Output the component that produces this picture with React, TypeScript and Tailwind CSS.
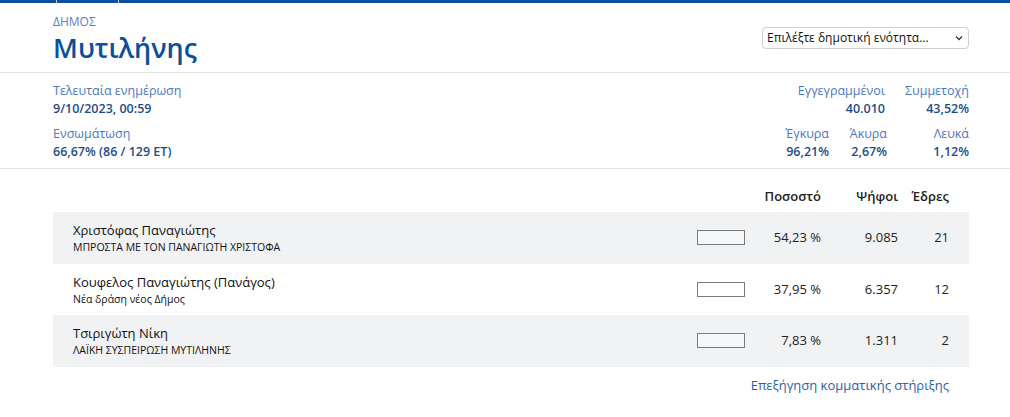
import React from "react";

const candidates = [
  { name: "Χριστόφας Παναγιώτης", party: "ΜΠΡΟΣΤΑ ΜΕ ΤΟΝ ΠΑΝΑΓΙΩΤΗ ΧΡΙΣΤΟΦΑ", pct: "54,23 %", votes: "9.085", seats: "21", bold: true },
  { name: "Κουφελος Παναγιώτης (Πανάγος)", party: "Νέα δράση νέος Δήμος", pct: "37,95 %", votes: "6.357", seats: "12", bold: false },
  { name: "Τσιριγώτη Νίκη", party: "ΛΑΪΚΗ ΣΥΣΠΕΙΡΩΣΗ ΜΥΤΙΛΗΝΗΣ", pct: "7,83 %", votes: "1.311", seats: "2", bold: false },
];

const Stat = ({ label, value, w }: { label: string; value: string; w: string }) => (
  <div className={`${w} text-right`}>
    <div className="text-[12.5px] leading-[18px] text-[#4d78bd]">{label}</div>
    <div className="text-[12.5px] leading-[18px] font-semibold text-[#1d4c8a]">{value}</div>
  </div>
);

export default function App() {
  return (
    <div className="min-h-[417px] bg-white font-['Open_Sans',sans-serif] text-[#222]">
      <div className="h-[3px] bg-[#0b4f9c] flex">
        <div className="w-[56px]" />
        <div className="w-px bg-white/70" />
        <div className="w-[61px]" />
        <div className="w-px bg-white/70" />
      </div>

      <div className="flex items-start justify-between pl-[53px] pr-[41px] pt-[11px] pb-[6px] border-b border-[#e2e2e2]">
        <div>
          <div className="text-[12px] leading-[16px] text-[#5b7fc6] uppercase">ΔΗΜΟΣ</div>
          <h1 className="text-[27px] leading-[36px] font-semibold text-[#0b4f9c]">Μυτιλήνης</h1>
        </div>
        <div className="mt-[13px] w-[207px] h-[22px] border border-[#cfcfcf] rounded-[4px] flex items-center justify-between pl-[4px] pr-[5px] text-[12px] text-[#111]">
          <span>Επιλέξτε δημοτική ενότητα...</span>
          <svg width="8" height="6" viewBox="0 0 8 6"><path d="M1 1.5 L4 4.5 L7 1.5" fill="none" stroke="#333" strokeWidth="1.3" /></svg>
        </div>
      </div>

      <div className="flex justify-between pl-[53px] pr-[41px] pt-[9px] pb-[7px] border-b border-[#e2e2e2]">
        <div className="flex flex-col gap-[7px]">
          <div>
            <div className="text-[12.5px] leading-[18px] text-[#4d78bd]">Τελευταία ενημέρωση</div>
            <div className="text-[12.5px] leading-[18px] font-semibold text-[#1d4c8a]">9/10/2023, 00:59</div>
          </div>
          <div>
            <div className="text-[12.5px] leading-[18px] text-[#4d78bd]">Ενσωμάτωση</div>
            <div className="text-[12.5px] leading-[18px] font-semibold text-[#1d4c8a]">66,67% (86 / 129 ΕΤ)</div>
          </div>
        </div>
        <div className="flex flex-col gap-[7px]">
          <div className="flex justify-end">
            <Stat label="Εγγεγραμμένοι" value="40.010" w="w-[100px]" />
            <Stat label="Συμμετοχή" value="43,52%" w="w-[84px]" />
          </div>
          <div className="flex justify-end">
            <Stat label="Έγκυρα" value="96,21%" w="w-[60px]" />
            <Stat label="Άκυρα" value="2,67%" w="w-[58px]" />
            <Stat label="Λευκά" value="1,12%" w="w-[82px]" />
          </div>
        </div>
      </div>

      <div className="pl-[53px] pr-[41px] pt-[16px]">
        <div className="flex pl-5 pr-5 h-[24px] items-center text-[13px] font-semibold text-[#222]">
          <div className="flex-1" />
          <div className="w-[48px]" />
          <div className="w-[76px] text-right">Ποσοστό</div>
          <div className="w-[77px] text-right">Ψήφοι</div>
          <div className="w-[51px] text-right">Έδρες</div>
        </div>
        <div className="mt-[3px]">
          {candidates.map((c, i) => (
            <div key={c.name} className={`flex items-center pl-5 pr-5 h-[51.5px] ${i % 2 === 0 ? "bg-[#f1f2f4]" : "bg-white"}`}>
              <div className="flex-1">
                <div className={`text-[13px] leading-[20px] text-[#111] ${c.bold ? "font-medium" : ""}`}>{c.name}</div>
                <div className="text-[10.5px] leading-[15px] text-[#111]">{c.party}</div>
              </div>
              <div className="w-[48px] h-[15px] border border-[#7a7a7a] bg-white/40" />
              <div className="w-[76px] text-right text-[13px]">{c.pct}</div>
              <div className="w-[77px] text-right text-[13px]">{c.votes}</div>
              <div className="w-[51px] text-right text-[13px]">{c.seats}</div>
            </div>
          ))}
        </div>
        <div className="flex justify-end pr-5 pt-[9px]">
          <span className="text-[13px] text-[#2b5f9e]">Επεξήγηση κομματικής στήριξης</span>
        </div>
      </div>
    </div>
  );
}
